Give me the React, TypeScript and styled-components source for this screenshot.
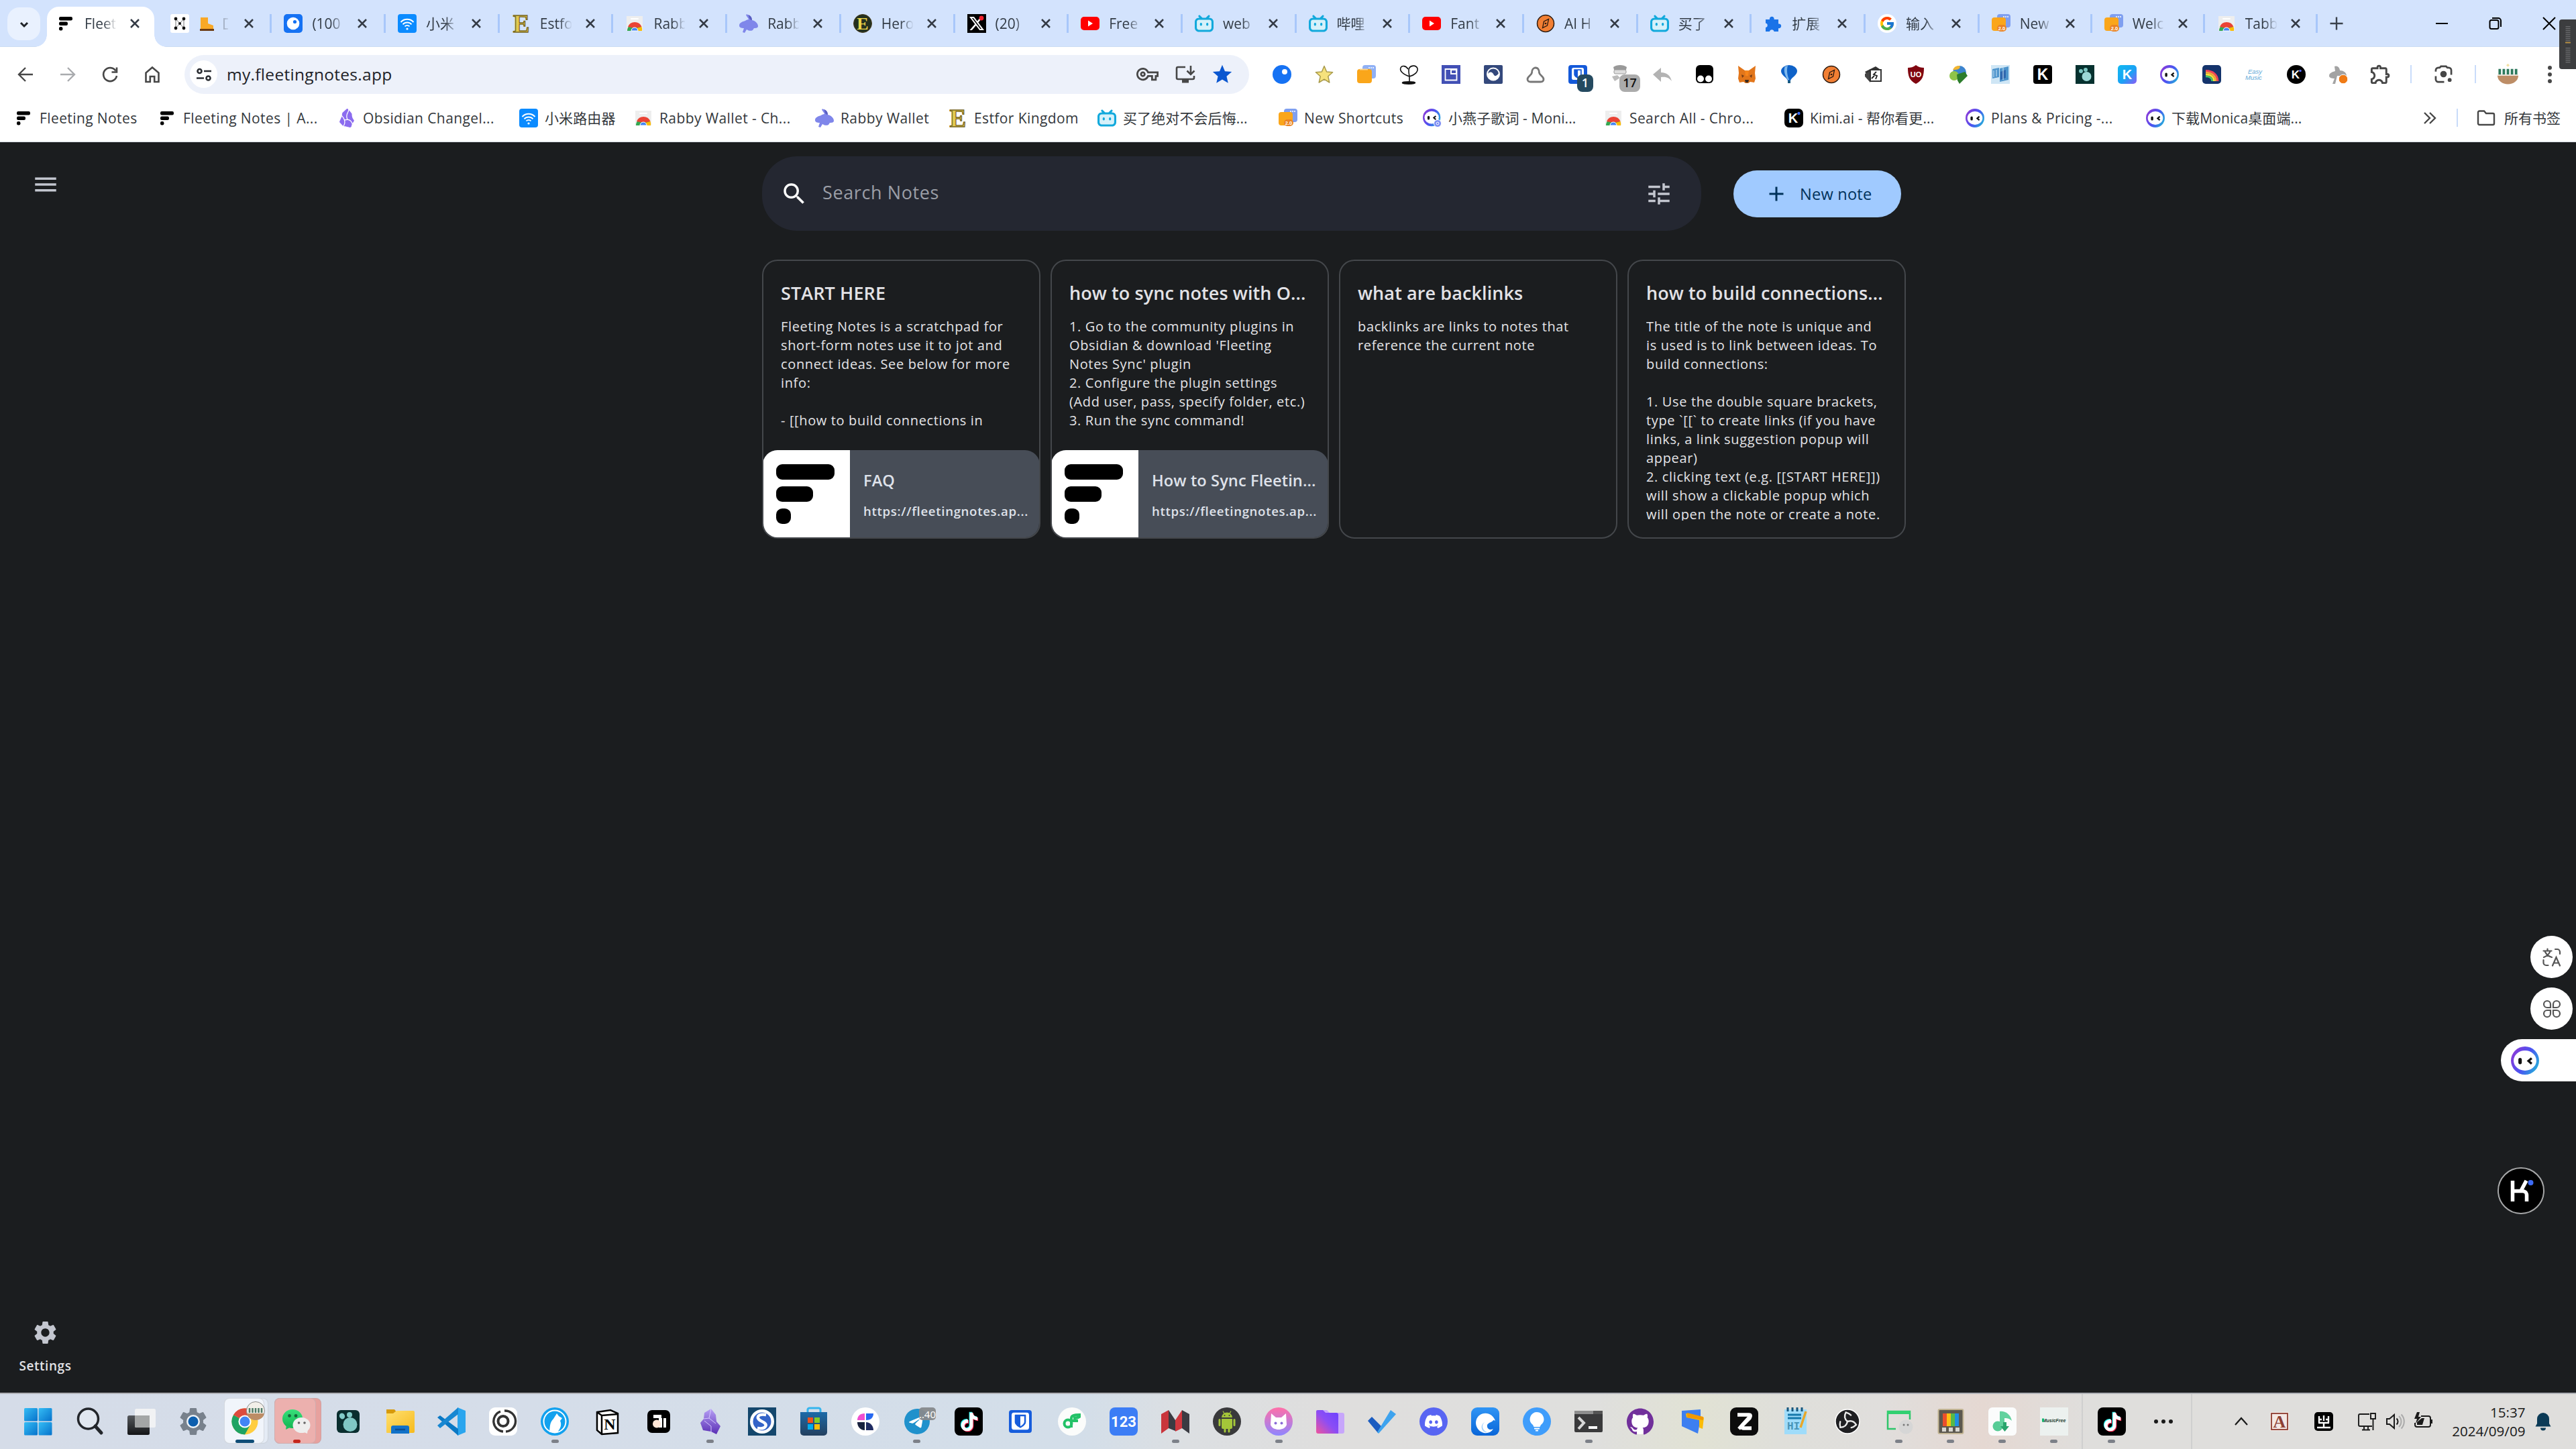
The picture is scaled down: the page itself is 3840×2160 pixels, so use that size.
import React from "react";
import styled, { createGlobalStyle } from "styled-components";
import {
  MdSearch, MdTune, MdMenu, MdSettings, MdAdd, MdStar, MdOutlineVpnKey, MdOutlineExtension,
} from "react-icons/md";
import {
  SiBilibili, SiObsidian, SiTiktok, SiBitwarden, SiDiscord, SiGithub, SiTelegram, SiX,
} from "react-icons/si";
import { FcGoogle } from "react-icons/fc";

const UI_FONT = `"Open Sans", "Noto Sans CJK SC", sans-serif`;

const GlobalStyle = createGlobalStyle`
  html, body { margin: 0; padding: 0; background: #1b1d1f; overflow: hidden; }
  * { box-sizing: border-box; }
  svg { display: block; flex: none; }
`;

/* ---------- browser chrome ---------- */

const Screen = styled.div`
  position: relative;
  display: flex;
  flex-direction: column;
  width: 3840px;
  height: 2160px;
  overflow: hidden;
  background: #1b1d1f;
  font-family: ${UI_FONT};
  font-size: 21px;
`;

const TabStrip = styled.div`
  display: flex;
  align-items: stretch;
  height: 70px;
  padding-left: 11px;
  background: #d3e3fd;
  border-bottom: 1px solid #cbdcf3;
`;

const TabSearch = styled.div`
  display: flex;
  align-items: center;
  justify-content: center;
  width: 49px;
  height: 49px;
  margin: 11px 6px 0 0;
  border-radius: 18px;
  background: #e9f1fe;
`;

const TabShell = styled.div<{ $active?: boolean; $w: number }>`
  position: relative;
  display: flex;
  align-items: center;
  width: ${(p) => p.$w}px;
  height: 70px;
  padding-left: 18px;
  flex: none;
  ${(p) =>
    p.$active &&
    `
    &::before {
      content: "";
      position: absolute;
      z-index: 0;
      left: 4px; top: 10px; width: 160px; height: 60px;
      border-radius: 18px 18px 0 0;
      background: #fff;
    }
    &::after {
      content: "";
      position: absolute;
      left: -14px; bottom: 0; width: 196px; height: 18px;
      background:
        radial-gradient(circle at 0 0, transparent 17.5px, #fff 18px) left / 18px 18px no-repeat,
        radial-gradient(circle at 100% 0, transparent 17.5px, #fff 18px) right / 18px 18px no-repeat;
    }
  `}
  & > * { position: relative; z-index: 1; }
`;

const TabTitle = styled.span`
  width: 47px;
  margin-left: 14px;
  overflow: hidden;
  white-space: nowrap;
  color: #323b45;
  line-height: 30px;
  mask-image: linear-gradient(90deg, #000 60%, rgba(0, 0, 0, 0.05) 100%);
`;

const TabClose = styled.span`
  display: flex;
  justify-content: center;
  width: 30px;
  margin-left: 13px;
`;

const TabDivider = styled.span<{ $hidden?: boolean }>`
  width: 3px;
  height: 28px;
  margin-left: auto;
  background: ${(p) => (p.$hidden ? "transparent" : "#a8c7fa")};
`;

const NewTab = styled.div`
  display: flex;
  align-items: center;
  justify-content: center;
  width: 56px;
`;

const WindowControls = styled.div`
  display: flex;
  align-items: center;
  margin-left: auto;
`;

const WindowButton = styled.div`
  display: flex;
  align-items: center;
  justify-content: center;
  width: 80px;
  height: 70px;
`;

const Toolbar = styled.div`
  display: flex;
  align-items: center;
  height: 81px;
  padding-left: 6px;
  background: #fff;
`;

const ToolButton = styled.div<{ $w?: number }>`
  position: relative;
  display: flex;
  align-items: center;
  justify-content: center;
  width: ${(p) => p.$w ?? 63}px;
  height: 48px;
  flex: none;
`;

const Omnibox = styled.div`
  display: flex;
  align-items: center;
  width: 1587px;
  height: 58px;
  margin: 0 17px 0 17px;
  padding-left: 8px;
  border-radius: 29px;
  background: #edf1fa;
  flex: none;
`;

const SiteInfo = styled.div`
  display: flex;
  align-items: center;
  justify-content: center;
  width: 41px;
  height: 41px;
  border-radius: 50%;
  background: #fff;
`;

const Url = styled.span`
  margin: 0 auto 0 14px;
  color: #1f2328;
  font-size: 24.5px;
  letter-spacing: 0.3px;
  line-height: 34px;
`;

const Badge = styled.span<{ $bg: string; $fg: string; $w: number }>`
  position: absolute;
  left: 31px;
  top: 24px;
  width: ${(p) => p.$w}px;
  height: 26px;
  border-radius: 8px;
  background: ${(p) => p.$bg};
  color: ${(p) => p.$fg};
  font-size: 18px;
  font-weight: 600;
  line-height: 25px;
  text-align: center;
`;

const ThinRule = styled.span`
  width: 2px;
  height: 27px;
  background: #c9dcfa;
  flex: none;
`;

const BookmarkBar = styled.div`
  display: flex;
  align-items: center;
  height: 61px;
  padding: 0 23px 11px 21px;
  background: #fff;
  border-bottom: 1px solid #d5dbe3;
`;

const BookmarkItem = styled.div<{ $w: number; $cjk?: boolean }>`
  display: flex;
  align-items: center;
  gap: 10px;
  width: ${(p) => p.$w}px;
  flex: none;
  color: #34383c;
  line-height: 30px;
  white-space: nowrap;
  letter-spacing: ${(p) => (p.$cjk ? "0.1px" : "0.4px")};
`;

const BarEnd = styled.div`
  display: flex;
  align-items: center;
  margin-left: auto;
  color: #34383c;
  line-height: 30px;
  white-space: nowrap;
`;

const AllBookmarks = styled.div`
  display: flex;
  align-items: center;
  gap: 13px;
  margin-left: 28px;
`;

/* ---------- notes page ---------- */

const Page = styled.main`
  display: flex;
  height: 1864px;
  background: #1b1d1f;
`;

const Rail = styled.nav`
  display: flex;
  flex-direction: column;
  align-items: center;
  justify-content: space-between;
  width: 135px;
  padding: 42px 0 26px;
  color: #c3c6cf;
`;

const RailItem = styled.div`
  display: flex;
  flex-direction: column;
  align-items: center;
  gap: 15px;
  color: #e2e2e6;
  font-size: 19px;
  font-weight: 600;
  letter-spacing: 0.55px;
  line-height: 28px;
`;

const Notes = styled.section`
  display: flex;
  flex-direction: column;
  gap: 43px;
  width: 1705px;
  margin: 21px auto 0 1001px;
`;

const SearchRow = styled.div`
  display: flex;
  align-items: center;
  height: 111px;
`;

const SearchBar = styled.div`
  display: flex;
  align-items: center;
  width: 1400px;
  height: 111px;
  padding: 0 42px 0 27px;
  border-radius: 52px;
  background: #242731;
  color: #fff;
`;

const SearchHint = styled.span`
  margin: -3px auto 0 21px;
  color: #9b9ea6;
  font-size: 27px;
  letter-spacing: 0.6px;
  line-height: 36px;
`;

const NewNote = styled.button`
  display: flex;
  align-items: center;
  gap: 17px;
  width: 250px;
  height: 70px;
  margin-left: 48px;
  padding: 0 0 0 46px;
  border: 0;
  border-radius: 35px;
  background: #a0caff;
  color: #00325a;
  font-family: ${UI_FONT};
  font-size: 23.6px;
  font-weight: 500;
  letter-spacing: 0.2px;
`;

const CardGrid = styled.div`
  display: grid;
  grid-template-columns: repeat(4, 415px);
  gap: 15px;
`;

const Card = styled.article`
  position: relative;
  display: flex;
  flex-direction: column;
  height: 416px;
  border: 2px solid #44474b;
  border-radius: 23px;
  overflow: hidden;
`;

const CardText = styled.div`
  flex: 1;
  min-height: 0;
  margin: 28px 0 25px 26px;
  overflow: hidden;
`;

const CardTitle = styled.h3`
  margin: 0;
  color: #e2e2e6;
  font-size: 27px;
  font-weight: 600;
  letter-spacing: 0.1px;
  line-height: 40px;
  white-space: nowrap;
`;

const CardBody = styled.p`
  margin: 16px 0 0;
  color: #e4e4e7;
  font-size: 20px;
  letter-spacing: 0.64px;
  line-height: 28px;
  white-space: pre;
`;

const LinkPreview = styled.div`
  display: flex;
  height: 131px;
  margin: 0 -1px -1px;
  border-radius: 22px;
  background: #474d57;
  overflow: hidden;
  flex: none;
`;

const PreviewImage = styled.div`
  display: flex;
  flex-direction: column;
  gap: 10.5px;
  width: 130px;
  padding: 21px 0 0 20px;
  background: #fff;
`;

const PreviewBar = styled.span<{ $w: number }>`
  width: ${(p) => p.$w}px;
  height: 22.5px;
  border-radius: 9px;
  background: #000;
`;

const PreviewText = styled.div`
  display: flex;
  flex-direction: column;
  gap: 17px;
  padding: 29px 0 0 20px;
  white-space: nowrap;
  color: #dfe2ea;
`;

const PreviewTitle = styled.span`
  font-size: 23.6px;
  font-weight: 600;
  letter-spacing: 0.1px;
  line-height: 33px;
`;

const PreviewUrl = styled.span`
  font-size: 18.6px;
  font-weight: 600;
  letter-spacing: 0.68px;
  line-height: 24px;
`;

/* ---------- floating widgets ---------- */

const MiniMap = styled.div`
  position: absolute;
  right: 0;
  top: 29px;
  display: flex;
  align-items: center;
  justify-content: center;
  width: 25px;
  height: 74px;
  border-radius: 4px 0 0 4px;
  background: #3c3d3f;
`;

const SideTools = styled.div`
  position: absolute;
  right: 0;
  top: 1395px;
  display: flex;
  flex-direction: column;
  align-items: flex-end;
  gap: 14px;
`;

const RoundTool = styled.div`
  display: flex;
  align-items: center;
  justify-content: center;
  width: 63px;
  height: 63px;
  margin-right: 5px;
  border-radius: 50%;
  background: #fff;
`;

const MonicaPill = styled.div`
  display: flex;
  align-items: center;
  width: 112px;
  height: 63px;
  padding-left: 15px;
  border-radius: 32px 0 0 32px;
  background: #fff;
`;

const KimiBubble = styled.div`
  position: absolute;
  left: 3723px;
  top: 1740px;
  display: flex;
  align-items: center;
  justify-content: center;
  width: 70px;
  height: 70px;
  border: 2px solid #a6a7a8;
  border-radius: 50%;
  background: #000;
`;

/* ---------- taskbar ---------- */

const Taskbar = styled.footer`
  display: flex;
  align-items: stretch;
  height: 84px;
  padding-left: 18.5px;
  border-top: 2px solid #aeb0b5;
  background: linear-gradient(
    90deg,
    #d5dce8 0%, #d5dde9 20%, #d3dee9 42%, #dcdfe2 46%, #dfdedd 52%, #dfdfdd 62%,
    #e1e2d4 66%, #dfdfda 69%, #e0dedc 73%, #e5d8d2 77%, #dfdedc 81%, #dfdedc 100%
  );
`;

const TaskSlot = styled.div<{ $w?: number }>`
  position: relative;
  display: flex;
  align-items: center;
  justify-content: center;
  width: ${(p) => p.$w ?? 77.05}px;
  height: 82px;
  flex: none;
`;

const Highlight = styled.span<{ $bg: string; $w: number; $x: number }>`
  position: absolute;
  left: ${(p) => p.$x}px;
  top: 6px;
  width: ${(p) => p.$w}px;
  height: 68px;
  border-radius: 8px;
  background: ${(p) => p.$bg};
  border: 1px solid rgba(160, 165, 175, 0.35);
`;

const TaskIcon = styled.span`
  position: relative;
`;

const RunMark = styled.span<{ $c: string; $w: number }>`
  position: absolute;
  left: calc(50% - ${(p) => p.$w / 2}px);
  bottom: 9px;
  width: ${(p) => p.$w}px;
  height: 5px;
  border-radius: 3px;
  background: ${(p) => p.$c};
`;

const TaskRule = styled.span`
  width: 2px;
  margin: 0 4px 0 3px;
  background: #cfcfcf;
`;

const Clock = styled.div`
  display: flex;
  flex-direction: column;
  justify-content: center;
  align-items: flex-end;
  width: 116px;
  margin-left: 13px;
  padding-top: 0;
  color: #1a1a1a;
  font-size: 20.6px;
  line-height: 28px;
`;

/* ---------- drawings, 28-unit box ---------- */

const chromeWheel = (
  <g>
    <circle cx="14" cy="14" r="13" fill="#ffcd40" />
    <path d="M14 14 L2.700 7.500 A13 13 0 0 1 25.300 7.500z" fill="#dd4b3e" />
    <path d="M14 14 L2.700 7.500 A13 13 0 0 0 14 27 L19 18z" fill="#1ea362" />
    <path d="M2.700 7.500 A13 13 0 0 1 25.300 7.500 H14z" fill="#dd4b3e" />
    <circle cx="14" cy="14" r="6.400" fill="#fff" />
    <circle cx="14" cy="14" r="5" fill="#4285f4" />
  </g>
);

const monicaFace = (
  <g>
    <circle cx="14" cy="14" r="14" fill="url(#monica)" />
    <ellipse cx="14" cy="14" rx="11.300" ry="10" fill="#fff" />
    <rect x="7.400" y="11.400" width="3.400" height="6.200" rx="1.700" fill="#111" />
    <path d="M20.600 11.600 L17.400 14.400 L20.600 17.200" fill="none" stroke="#111" strokeWidth="2.200" />
  </g>
);

const letter = (ch: string, fill: string, size = 22, y = 22, family = "Liberation Sans") => (
  <text x="14" y={y} textAnchor="middle" fontFamily={family} fontWeight="700" fontSize={size} fill={fill}>
    {ch}
  </text>
);

const art: Record<string, React.ReactNode> = {
  fleeting: (
    <g fill="#000">
      <rect x="4" y="4" width="20" height="5.400" rx="2.200" />
      <rect x="4" y="11.500" width="13" height="5.400" rx="2.200" />
      <rect x="4" y="19" width="5.400" height="5.400" rx="2.200" />
    </g>
  ),
  nodes: (
    <g>
      <rect width="28" height="28" rx="3" fill="#fff" />
      <path d="M8 7v14M20 7v14M8 7l6 7-6 7M20 7l-6 7 6 7" stroke="#777" strokeWidth="1" fill="none" />
      <g fill="#111"><circle cx="8" cy="7" r="2.400" /><circle cx="20" cy="7" r="2.400" /><circle cx="14" cy="14" r="2" /><circle cx="8" cy="21" r="2.400" /><circle cx="20" cy="21" r="2.400" /></g>
    </g>
  ),
  blueSquare: (
    <g><rect width="28" height="28" rx="5" fill="#1672f3" /><circle cx="14" cy="14" r="9.300" fill="#fff" /><circle cx="16.500" cy="11.500" r="2.600" fill="#1672f3" /></g>
  ),
  blueCircle: (
    <g><circle cx="14" cy="14" r="14" fill="#1672f3" /><circle cx="18" cy="10" r="4" fill="#fff" /></g>
  ),
  wifi: (
    <g>
      <rect width="28" height="28" rx="4" fill="#0b8bff" />
      <g fill="none" stroke="#fff" strokeWidth="2"><path d="M4.500 12a13 13 0 0 1 19 0" /><path d="M7.500 15.400a9 9 0 0 1 13 0" /><path d="M10.500 18.400a5 5 0 0 1 7 0" /></g>
      <circle cx="14" cy="22" r="1.600" fill="#fff" />
    </g>
  ),
  estfor: (
    <text x="14" y="26.500" textAnchor="middle" fontFamily="Liberation Serif" fontWeight="700" fontSize="37" fill="#e3c94f" stroke="#7a681f" strokeWidth="1.300">E</text>
  ),
  hero: (
    <g>
      <circle cx="14" cy="14" r="13.500" fill="#23301f" stroke="#4b3f22" />
      <text x="14" y="22.500" textAnchor="middle" fontFamily="Liberation Serif" fontWeight="700" fontSize="26" fill="#ecd64a">E</text>
    </g>
  ),
  webstore: (
    <g>
      <path d="M2 3h24v22H2z" fill="#eeeeee" />
      <rect x="8" y="6" width="12" height="2" rx="1" fill="#fff" />
      <path d="M3 25a11 11 0 0 1 22 0h-6a5 5 0 0 0-10 0z" fill="#34a853" />
      <path d="M4 19a11 11 0 0 1 20.500 0l-8 1.500-5 0z" fill="#ea4335" />
      <path d="M24.500 19a11 11 0 0 1 .5 6h-7l-1-4z" fill="#fbbc04" />
      <path d="M9 25a5 5 0 0 1 10 0z" fill="#4285f4" stroke="#fff" />
    </g>
  ),
  rabby: (
    <g fill="#7f86ea">
      <path d="M10 1c5-1 9 3 9 8 5 1 9 5 9 9 0 3-4 3-6 3l-2 3c-4 2-7 0-9-1l-3 5-3-1 2-6c-4 0-7-1-7-4 0-4 5-6 9-7 1-1 3-2 5-2-1-3-3-4-4-7z" />
      <path d="M10 1c5-1 9 3 9 8-3 0-5-3-5-8z" fill="#5a5fc0" />
    </g>
  ),
  xcom: (
    <g><rect width="28" height="28" fill="#000" /><g transform="translate(3 3)"><SiX size={22} color="#fff" /></g><circle cx="21" cy="6" r="3.400" fill="#f4212e" /></g>
  ),
  youtube: (<g><rect y="4" width="28" height="20" rx="5" fill="#f00" /><path d="M11 9.500v9l7-4.500z" fill="#fff" /></g>),
  bili: (
    <g><rect x="1.500" y="7" width="25" height="18" rx="4" fill="#d6f1fa" /><SiBilibili size={28} color="#12a9dc" /></g>
  ),
  compass: (
    <g><circle cx="14" cy="14" r="12.500" fill="#f27f33" stroke="#2b1a10" strokeWidth="1.500" /><path d="M18.500 7.500l-2 9.500-7 3.500 2-9.500z" fill="#f27f33" stroke="#2b1a10" strokeWidth="1.300" /><circle cx="14" cy="14" r="1.300" fill="#2b1a10" /></g>
  ),
  puzzleBlue: (
    <path d="M3 8h6a3.400 3.400 0 1 1 6.600 0H22v6.500a3.400 3.400 0 1 1 0 6.600V26h-6.500a3.300 3.300 0 0 0-6.500 0H3v-6a3.300 3.300 0 0 0 0-6.500z" fill="#1a73e8" />
  ),
  google: (<g><circle cx="14" cy="14" r="14" fill="#fff" /><g transform="translate(2 2)"><FcGoogle size={24} /></g></g>),
  shortcuts2: (
    <g>
      <rect x="8" y="0" width="20" height="20" rx="4" fill="#7f9ff0" />
      <g fill="#fff"><circle cx="18" cy="4" r="1" /><circle cx="21" cy="4" r="1" /><circle cx="24" cy="4" r="1" /></g>
      <rect y="5" width="21" height="20" rx="4" fill="#faa61a" />
      <rect x="8" y="16" width="14" height="10" rx="5" fill="#ea8324" />
      <text x="15" y="24" textAnchor="middle" fontFamily="Liberation Sans" fontWeight="700" fontSize="7.500" letterSpacing="0" fill="#fff">2.0</text>
    </g>
  ),
  shortcuts: (
    <g>
      <rect x="8" y="0" width="20" height="20" rx="4" fill="#8fb0f5" />
      <g fill="#fff"><circle cx="18" cy="4" r="1" /><circle cx="21" cy="4" r="1" /><circle cx="24" cy="4" r="1" /></g>
      <rect y="6" width="22" height="21" rx="4" fill="#faa61a" /><path d="M4 6.500h12" stroke="#fcd38a" strokeWidth="2" />
    </g>
  ),
  star: (
    <path d="M14 1.500l3.600 8.500 9 .8-6.800 6 2 9.200-7.800-4.800L6.200 26l2-9.200-6.800-6 9-.8z" fill="#f6e27c" stroke="#a99b4c" strokeWidth="1.500" strokeLinejoin="round" />
  ),
  heartTree: (
    <g fill="none" stroke="#111" strokeWidth="1.600"><path d="M15 17C6 14 0 9 2 4c2-4 8-3 11 2M15 17c8-2 13-7 12-12-2-5-9-5-12-1-2 3-1 8 0 13v9" /><ellipse cx="14" cy="26.500" rx="9.500" ry="1.600" fill="#111" /></g>
  ),
  pip: (<g><rect width="28" height="28" fill="#4250b5" /><path d="M5.500 6h17v16.500h-17z" fill="none" stroke="#fff" strokeWidth="1.800" /><path d="M13 6h10v8H13z" fill="#fff" /><path d="M15 8h6v4h-6z" fill="#4250b5" /></g>),
  wave: (<g><rect width="28" height="28" rx="2" fill="#34497c" /><circle cx="14" cy="13.500" r="9" fill="#34497c" stroke="#fff" strokeWidth="2" /><path d="M5.500 14c3-5 7-4 9 0s5 2 8.500-3c0 8-4 11-9 11-4 0-8-3-8.500-8z" fill="#fff" /></g>),
  penguin: (<path d="M14 4c4 0 5.500 4 5.500 7.500C20 15 26 17 26 21c0 3-2 4-4.500 4H6.500C4 25 2 24 2 21c0-4 6-6 6.500-9.500C8.500 8 10 4 14 4z" fill="#fff" stroke="#777" strokeWidth="2.800" />),
  bitwarden: (<g><rect width="28" height="28" rx="4" fill="#1459d9" /><g transform="translate(5 4)"><SiBitwarden size={18} color="#fff" /></g></g>),
  robber: (<g fill="#aaa"><path d="M4 3c5-4 15-4 20 0l-1 4H5z" fill="#999" /><rect x="5" y="7" width="18" height="6" rx="2" fill="#ddd" stroke="#999" /><path d="M2 17l8-2 4 4-8 5z" fill="#bbb" /></g>),
  reply: (<path d="M12 4v7c9 0 14 5 16 13-4-5-8-7-16-6v7L0 14z" fill="#b3b3b3" />),
  tamper: (<g><rect x="1" width="26" height="27" rx="6" fill="#000" /><circle cx="8" cy="20.500" r="5" fill="#fff" /><circle cx="20" cy="20.500" r="5" fill="#fff" /></g>),
  fox: (<g><path d="M1 1l10 7h6l10-7-1 11 1 8-2 6-6-1-3 2h-4l-3-2-6 1-2-6 1-8z" fill="#e2761b" /><path d="M10 16l-4-2 1 5zM18 16l4-2-1 5z" fill="#763d16" /><path d="M11 22h6l-1 4h-4z" fill="#3a2b21" /><path d="M11 8h6l-1 8h-4z" fill="#f6851b" /></g>),
  balloon: (<g><path d="M2 9a12 9 0 0 1 24 0c0 6-8 9-10 14h-4C10 18 2 15 2 9z" fill="#0f62c8" /><path d="M8 2c-3 6 0 14 4 20h2C11 15 10 7 12 1z" fill="#7db8ee" /><path d="M12 23h4v4h-4z" fill="#1a5a80" /></g>),
  runner: (<g><path d="M1 10L17 2l9 6-20 8z" fill="#333" /><path d="M1 13l8-4v17l-8-9z" fill="#444" /><rect x="9" y="7" width="16" height="17" fill="#fff" stroke="#333" strokeWidth="2" /><path d="M18 10l-4 4 5 2-2 5M15 16l-4 4" stroke="#222" strokeWidth="1.800" fill="none" /></g>),
  ublock: (<g><path d="M14 0c4 3 8 4 12 4 0 12-2 19-12 24C4 23 2 16 2 4c4 0 8-1 12-4z" fill="#800610" /><text x="14" y="17.500" textAnchor="middle" fontFamily="Liberation Sans" fontWeight="700" fontSize="11" fill="#fff">UO</text></g>),
  idm: (<g><circle cx="16" cy="11" r="10" fill="#3b84cf" /><path d="M6 7a10 10 0 0 1 10-6c3 4-4 7-10 6z" fill="#f3b52f" /><circle cx="8" cy="16" r="7" fill="#8fc44a" /><path d="M12 14l12-4 4 6-12 12-3-5z" fill="#2c7d2c" /></g>),
  idm2: (<g><rect width="28" height="28" fill="#cfe6f5" /><path d="M2 6l10-2v14L2 20zM13 5l13-3v20l-13 3z" fill="#4e94cc" /><path d="M14 10l8-3v12l-8 3z" fill="#2f67ae" /><path d="M4 8v10M8 7v10M18 4v18" stroke="#cfe6f5" strokeWidth="1" /></g>),
  kBlack: (<g><rect width="28" height="28" rx="4" fill="#000" />{letter("K", "#fff", 23)}</g>),
  paw: (<g><rect width="28" height="28" fill="#06312f" /><circle cx="8" cy="9" r="3" fill="#7cc7c3" /><circle cx="15" cy="7" r="3" fill="#7cc7c3" /><circle cx="16.500" cy="17" r="7" fill="#9bd8d6" /></g>),
  kBlue: (<g><rect width="28" height="28" rx="5" fill="url(#kblue)" />{letter("K", "#fff", 20, 21)}</g>),
  monica: monicaFace,
  monicaBadge: (<g><g transform="scale(.94)">{monicaFace}</g><circle cx="22" cy="22" r="5.500" fill="#7b8cf3" stroke="#fff" strokeWidth="1" /><circle cx="22" cy="22" r="2" fill="none" stroke="#fff" /></g>),
  rainbow: (<g><rect width="28" height="28" rx="5" fill="#14336b" /><g fill="none" strokeWidth="2.800"><path d="M5 8.500c11 0 18 6 18 15.500" stroke="#f0405a" /><path d="M5 11.200c9.500 0 15.200 5 15.200 12.800" stroke="#f9a13a" /><path d="M5 14c8 0 12.500 4 12.500 10" stroke="#f9e03a" /><path d="M5 16.800c6 0 9.700 3 9.700 7.200" stroke="#46c46a" /></g></g>),
  easyMusic: (<g fontFamily="Liberation Sans" fontStyle="italic" fontWeight="400" fill="#62a9d8"><text x="5" y="13" fontSize="9.500">Easy</text><text x="1" y="22" fontSize="9.500">Music</text></g>),
  kimi: (<g><rect width="28" height="28" rx="7" fill="#000" /><g transform="translate(-1 0)">{letter("K", "#fff", 20, 21)}</g><circle cx="21.500" cy="7" r="2.200" fill="#3a6bff" /></g>),
  kimiRound: (<g><circle cx="14" cy="14" r="14" fill="#000" /><g transform="translate(-1 0)">{letter("K", "#fff", 17, 20)}</g><circle cx="20" cy="8.500" r="1.800" fill="#5468ff" /></g>),
  rabbitDot: (<g><path d="M8 2c4-2 8 2 8 6 5 0 10 3 10 8H12l-3 12H5l3-8c-4 0-8-1-8-4 0-4 5-6 9-7z" fill="#a3a3a3" /><circle cx="21" cy="21" r="6.800" fill="#f07b16" stroke="#fff" /></g>),
  lens: (<g fill="none" stroke="#474747" strokeWidth="2.800"><path d="M2 10V8a4 4 0 0 1 4-4h2l2-2h8l2 2h2a4 4 0 0 1 4 4v7M2 17v5a4 4 0 0 0 4 4h9" /><circle cx="14" cy="14" r="5" fill="#474747" stroke="none" /><circle cx="23.500" cy="23" r="3" fill="#474747" stroke="none" /></g>),
  avatar: (<g><path d="M0 16h28a14 11.500 0 0 1-28 0z" fill="#bd8d66" /><g stroke="#2e7a5d" strokeWidth="3.400"><path d="M3 7v8M8.500 7v8M14 7v8M19.500 7v8M25 7v8" /></g><path d="M0 15h28" stroke="#e9dccf" /><circle cx="14" cy="2" r="1.800" fill="#f3e0a5" /></g>),
};

const Art = ({ name, size = 28 }: { name: string; size?: number }) => (
  <svg width={size} height={size} viewBox="0 0 28 28" overflow="visible">{art[name]}</svg>
);

const Stroke = ({ d, size = 28, w = 2.4, color = "#474747" }: { d: string; size?: number; w?: number; color?: string }) => (
  <svg width={size} height={size} viewBox="0 0 28 28" fill="none" stroke={color} strokeWidth={w}>
    <path d={d} />
  </svg>
);

const HiddenSvg = styled.svg`
  position: absolute;
`;

const Gradients = () => (
  <HiddenSvg width="0" height="0">
    <defs>
      <linearGradient id="monica" x1="0" y1=".3" x2="1" y2=".8"><stop offset="0" stopColor="#8a3ad8" /><stop offset=".5" stopColor="#4a55f2" /><stop offset="1" stopColor="#22b5d8" /></linearGradient>
      <linearGradient id="kblue" x1="0" y1="0" x2="1" y2="1"><stop offset="0" stopColor="#12b9f0" /><stop offset=".55" stopColor="#1aa2f5" /><stop offset="1" stopColor="#8e5bf5" /></linearGradient>
      <linearGradient id="win" x1="0" y1="0" x2="1" y2="1"><stop offset="0" stopColor="#35bdf5" /><stop offset="1" stopColor="#0672cb" /></linearGradient>
      <linearGradient id="dark" x1="0" y1="0" x2="0" y2="1"><stop offset="0" stopColor="#55585c" /><stop offset="1" stopColor="#141517" /></linearGradient>
      <linearGradient id="folder" x1="0" y1="0" x2="1" y2="1"><stop offset="0" stopColor="#ffe071" /><stop offset="1" stopColor="#f6ba1c" /></linearGradient>
      <linearGradient id="purple" x1="1" y1="0" x2="0" y2="1"><stop offset="0" stopColor="#6a43ff" /><stop offset=".5" stopColor="#8c4df5" /><stop offset="1" stopColor="#f0559b" /></linearGradient>
      <linearGradient id="cat" x1="0" y1="0" x2="0" y2="1"><stop offset="0" stopColor="#ff6fa8" /><stop offset="1" stopColor="#8f86ff" /></linearGradient>
      <linearGradient id="gem" x1="0" y1="0" x2="0" y2="1"><stop offset="0" stopColor="#b7a0f5" /><stop offset="1" stopColor="#5a2fb5" /></linearGradient>
      <linearGradient id="store" x1="0" y1="0" x2="0" y2="1"><stop offset="0" stopColor="#1c6aa8" /><stop offset="1" stopColor="#24405f" /></linearGradient>
      <linearGradient id="blue" x1="0" y1="0" x2="0" y2="1"><stop offset="0" stopColor="#2f95f5" /><stop offset="1" stopColor="#0a66d8" /></linearGradient>
      <linearGradient id="green" x1="0" y1="0" x2="0" y2="1"><stop offset="0" stopColor="#38e07b" /><stop offset="1" stopColor="#12b552" /></linearGradient>
    </defs>
  </HiddenSvg>
);

/* ---------- taskbar drawings, 42-unit box ---------- */

const tiktok = (
  <g>
    <rect width="42" height="42" rx="8" fill="#000" />
    <g transform="translate(7 6.500)"><SiTiktok size={28} color="#25f4ee" /></g>
    <g transform="translate(9 8.500)"><SiTiktok size={28} color="#fe2c55" /></g>
    <g transform="translate(8 7.500)"><SiTiktok size={28} color="#fff" /></g>
  </g>
);

const obsArm = "M21 21c-1-6 2-10 7-12 2 3 3 5 3 8";

const task: Record<string, React.ReactNode> = {
  windows: (<g fill="url(#win)"><rect x="0" y="1" width="20" height="19.500" rx="1.500" /><rect x="21.500" y="1" width="20" height="19.500" rx="1.500" /><rect x="0" y="22" width="20" height="19.500" rx="1.500" /><rect x="21.500" y="22" width="20" height="19.500" rx="1.500" /></g>),
  search: (<g fill="none" stroke="#23262b"><circle cx="18.500" cy="17" r="15" strokeWidth="3.500" fill="#e1e7f0" /><path d="M29 28l9 10" strokeWidth="5" strokeLinecap="round" /></g>),
  taskview: (<g><rect x="0" y="12" width="33" height="29" rx="2.500" fill="url(#dark)" /><rect x="11" y="2" width="31" height="28" rx="2.500" fill="#f6f6f6" opacity=".85" /><path d="M11 12h22v18H13a2 2 0 0 1-2-2z" fill="#a4a6a6" /></g>),
  settings: (<g><g transform="translate(-4 -4)"><MdSettings size={50} color="#78818c" /></g><circle cx="21" cy="21" r="10" fill="#eef3f8" /><circle cx="21" cy="21" r="7.500" fill="#0d5fae" /></g>),
  chrome: (<g><g transform="scale(1.5)">{chromeWheel}</g><circle cx="37" cy="5" r="13.500" fill="#f2efe9" stroke="#8c8c8c" /><path d="M24.500 9h25a12.500 10 0 0 1-25 0z" fill="#bd8d66" /><path d="M28 1v7M32.500 1v7M37 1v7M41.500 1v7M46 1v7" stroke="#4f7d68" strokeWidth="2.600" /></g>),
  wechat: (<g><ellipse cx="15" cy="17" rx="15" ry="14" fill="url(#green)" /><path d="M6 26l-1 7 8-4z" fill="#1cbf5b" /><circle cx="10.500" cy="12.500" r="2.400" fill="#14683b" /><circle cx="20" cy="12.500" r="2.400" fill="#14683b" /><ellipse cx="28.500" cy="26.500" rx="13" ry="11.500" fill="#eee" /><path d="M30 36l7 3 1-7z" fill="#eee" /><circle cx="24.500" cy="23" r="1.800" fill="#666" /><circle cx="33" cy="23" r="1.800" fill="#666" /></g>),
  paw: (<g><rect x="4" y="4" width="34" height="34" rx="6" fill="#0a2e2f" /><ellipse cx="12" cy="13" rx="4" ry="4.500" fill="#82cbc9" transform="rotate(-30 12 13)" /><circle cx="23" cy="11" r="4" fill="#82cbc9" /><circle cx="24" cy="25.500" r="10.500" fill="#7fc7c4" /></g>),
  explorer: (<g><path d="M1 3h12l4 5-2 4H1z" fill="#d79a0c" /><path d="M1 9h10l5-4h25a2 2 0 0 1 2 2v29a2 2 0 0 1-2 2H2a1 1 0 0 1-1-1z" fill="url(#folder)" /><path d="M8 39V30a3 3 0 0 1 3-3h21a3 3 0 0 1 3 3v9z" fill="#1272c8" /><path d="M14 33h15" stroke="#0b4f93" strokeWidth="2.500" /></g>),
  vscode: (<g><path d="M30 0l12 5v32l-12 5z" fill="#2aa5ee" /><path d="M0 15l4-3 27 20V42z" fill="#0a78c4" /><path d="M0 27l4 4 27-21V0z" fill="#1787d2" /></g>),
  ring: (<g><rect width="42" height="42" rx="9" fill="#fff" /><path d="M17 6a15.500 15.500 0 0 0 4 30M25 36a15.500 15.500 0 0 0-2-31" fill="none" stroke="#333" strokeWidth="3.400" /><circle cx="21" cy="20.500" r="7.500" fill="none" stroke="#333" strokeWidth="4" /></g>),
  wolf: (<g><circle cx="21" cy="21" r="21" fill="#12a1ee" /><circle cx="21" cy="21" r="16.500" fill="none" stroke="#fff" strokeWidth="2" /><path d="M24 9l3 4 5 3-3 4c3 6 0 12-4 17H13c1-8 0-14 6-20z" fill="#fff" /></g>),
  notion: (<g><path d="M6 7l20-3 11 5v29l-24 2-7-6z" fill="#fff" stroke="#000" strokeWidth="2.500" /><path d="M6 7l7 5 24-2M13 12v27" fill="none" stroke="#000" strokeWidth="2.500" /><text x="25" y="33" textAnchor="middle" fontFamily="Liberation Serif" fontWeight="700" fontSize="24">N</text></g>),
  ai: (<g><rect x="4" y="4" width="34" height="34" rx="7" fill="#000" /><path d="M13 11h12v5H13zM21 16h5v14h-5zM28 16h4v14h-4z" fill="#fff" /><circle cx="18" cy="24.500" r="6" fill="#ffe6d6" /></g>),
  gem: (<g><path d="M22 2l7 9 1 10 6 7-6 12-8-4-12-2-4-11 5-6 1-9z" fill="url(#gem)" /><path d="M22 2l-3 14 10 8M19 16l-8 1M12 20l10 8v12" stroke="#d6c8ff" strokeWidth="1" fill="none" /></g>),
  sBlue: (<g><rect width="42" height="42" fill="#14476d" /><circle cx="21" cy="21" r="18" fill="#fff" /><circle cx="21" cy="21" r="13.500" fill="#3363c8" /><path d="M27 11c-14-2-16 6-6 10s6 12-7 10" fill="none" stroke="#fff" strokeWidth="4.500" /></g>),
  store: (<g><path d="M12 8V3a3 3 0 0 1 3-2h13a3 3 0 0 1 3 2v5" fill="none" stroke="#35b5ee" strokeWidth="3" /><path d="M1 7h40v30a5 5 0 0 1-5 5H6a5 5 0 0 1-5-5z" fill="url(#store)" /><path d="M12 15h8v8h-8z" fill="#f1511b" /><path d="M22 15h8v8h-8z" fill="#80cc28" /><path d="M12 25h8v8h-8z" fill="#00adef" /><path d="M22 25h8v8h-8z" fill="#fbbc09" /></g>),
  petals: (<g><circle cx="21" cy="21" r="21" fill="#fff" /><path d="M20 9v10H9c0-6 4-10 11-10z" fill="#ef4fd0" /><path d="M22 9h11c0 7-5 10-11 10z" fill="#2668f0" /><path d="M9 22h11v12C13 34 9 28 9 22z" fill="#18223f" /><path d="M22 22c6 0 11 5 11 12H22z" fill="#1f2b62" /></g>),
  telegram: (<g><circle cx="21" cy="21" r="18" fill="#fff" /><g transform="translate(2 2)"><SiTelegram size={38} color="#1f91cc" /></g><rect x="24" y="0" width="25" height="19" rx="5" fill="#86898c" opacity=".95" /><text x="36.500" y="15.500" textAnchor="middle" fontFamily="Open Sans" fontSize="15" fill="#fff">..40</text></g>),
  tiktok,
  bitwarden: (<g><rect x="4" y="4" width="34" height="34" rx="4" fill="#175ddc" /><g transform="translate(8 7.500)"><SiBitwarden size={26} color="#fff" /></g></g>),
  leafG: (<g><circle cx="21" cy="21" r="21" fill="#fbfcfb" /><circle cx="15" cy="24" r="5.500" fill="none" stroke="#23c268" strokeWidth="4" /><path d="M20 30V16c0-4 4-5 12-5v3c-3 2-6 2-9 2M22 20h8" fill="none" stroke="#23c268" strokeWidth="4" /></g>),
  n123: (<g><rect width="42" height="42" rx="8" fill="#3c7df5" /><text x="21" y="29" textAnchor="middle" fontFamily="Roboto" fontWeight="700" fontSize="22" fill="#fff">123</text></g>),
  zig: (<g><path d="M0 10L11 4v27L0 39z" fill="#c9353c" /><path d="M11 4l10 15v16L11 31z" fill="#3b3b42" /><path d="M21 19L31 4v27l-10 5z" fill="#d0373e" /><path d="M31 4l11 6v29l-11-8z" fill="#3b3b42" /></g>),
  android: (<g><circle cx="21" cy="21" r="21" fill="#39393b" /><path d="M13 17h16v13a2 2 0 0 1-2 2H15a2 2 0 0 1-2-2zM13 15a8 7.500 0 0 1 16 0z" fill="#a4c639" /><path d="M10 18.500v8M32 18.500v8M18 32v4M24 32v4" stroke="#a4c639" strokeWidth="3" strokeLinecap="round" /><path d="M15 5.500l2 3.500M27 5.500l-2 3.500" stroke="#a4c639" strokeWidth="1.200" /><circle cx="17.500" cy="12" r="1" fill="#39393b" /><circle cx="24.500" cy="12" r="1" fill="#39393b" /></g>),
  cat: (<g><circle cx="21" cy="21" r="21" fill="url(#cat)" /><path d="M10 9l7 6h8l7-6 1 17c-2 5-7 7-12 7s-10-2-12-7z" fill="#fff" /><circle cx="16.500" cy="23.500" r="2" fill="#8a6bd8" /><circle cx="25.500" cy="23.500" r="2" fill="#8a6bd8" /></g>),
  folderP: (<g><path d="M8 4h8l4 4h19a3 3 0 0 1 3 3v25a3 3 0 0 1-3 3H10z" fill="#c7a6fb" /><path d="M0 6a2 2 0 0 1 2-2h8l4 4h16a3 3 0 0 1 3 3v28H3a3 3 0 0 1-3-3z" fill="url(#purple)" /></g>),
  todo: (<g><path d="M0 20l6-6 15 15-6 9z" fill="#1b5cc0" /><path d="M14 37L34 4l8 6-26 29z" fill="#3ea3ee" /></g>),
  discord: (<g><circle cx="21" cy="21" r="21" fill="#5865f2" /><g transform="translate(8 8)"><SiDiscord size={26} color="#fff" /></g></g>),
  bird: (<g><rect width="42" height="42" rx="9" fill="url(#blue)" /><path d="M36 20c-3-10-15-15-24-8-9 8-5 23 7 26 6 1 11-1 14-6-6 3-10-1-9-6 2-4 8-4 9-7 1 0 2 0 3 1z" fill="#fff" /><path d="M20 22c-6 6-2 13 4 15-8 1-12-10-4-15z" fill="#9fd0fb" /></g>),
  bulb: (<g><circle cx="21" cy="21" r="21" fill="#3f9dfb" /><path d="M21 7a10.500 10.500 0 0 1 6 19l-1.500 3h-9L15 26a10.500 10.500 0 0 1 6-19zM17 30.500h8v2h-8zM19 33.500h4v2h-4z" fill="#fff" /></g>),
  terminal: (<g><rect y="5" width="42" height="32" rx="2" fill="#3a3a3b" /><path d="M0 5h28v5H0z" fill="#8e8e8e" /><path d="M28 5h14v5H28z" fill="#555" /><path d="M6 15l8 8-8 9" fill="none" stroke="#d8d8d8" strokeWidth="4" /><path d="M21 30h13" stroke="#fff" strokeWidth="4" /></g>),
  github: (<g><circle cx="21" cy="21" r="19" fill="#fff" /><g transform="translate(1 1)"><SiGithub size={40} color="#71309b" /></g></g>),
  files: (<g><path d="M5 5l28-2v13l-4 23L5 28z" fill="#3d7ff0" /><path d="M11 9l27 6-2 17-5-2V19L12 15z" fill="#fbbc05" /><path d="M13 8l24 6v5L13 15z" fill="#f29900" /></g>),
  zBlack: (<g><rect width="42" height="42" rx="9" fill="#0c0c0c" /><path d="M11 11h17q4 0 1 5L19 26q-3 5 1 5h12" fill="none" stroke="#fff" strokeWidth="5.500" /><path d="M30 13L13 32" stroke="#fff" strokeWidth="5" /></g>),
  notepad: (<g><path d="M4 3h33v37H4z" fill="#9fdcfa" /><path d="M9 0v6M16 0v6M23 0v6M30 0v6" stroke="#17567d" strokeWidth="3" /><path d="M9 11h20M9 16h20" stroke="#1579ab" strokeWidth="3" /><text x="8" y="33" fontFamily="Liberation Mono" fontWeight="700" fontSize="16" fill="#4795b8">HI</text><path d="M36 6L28 30" stroke="#e9a72a" strokeWidth="3.500" /></g>),
  obs: (<g><circle cx="21" cy="21" r="18" fill="#1f1f22" stroke="#fff" strokeWidth="1.500" /><g fill="none" stroke="#e8e8e8" strokeWidth="2.400" strokeLinecap="round"><path d={obsArm} transform="rotate(-40 21 21)" /><path d={obsArm} transform="rotate(80 21 21)" /><path d={obsArm} transform="rotate(200 21 21)" /></g></g>),
  wxwork: (<g><path d="M16 32H4V6h33v12" fill="none" stroke="#2fc56a" strokeWidth="2.500" /><path d="M3 5h35v5H3z" fill="#32d070" /><circle cx="31" cy="29" r="10.500" fill="#d6d6d6" /><circle cx="28" cy="26" r="1.500" fill="#777" /><circle cx="34" cy="26" r="1.500" fill="#777" /></g>),
  powertoys: (<g><rect x="2.500" y="3" width="37" height="36" rx="2" fill="#5c584f" stroke="#c3b594" strokeWidth="2" /><path d="M9 9h6v19H9z" fill="#ea4f2c" /><path d="M15 9h6v19h-6z" fill="#fbc014" /><path d="M21 9h6v19h-6z" fill="#56b947" /><path d="M27 9h6v19h-6z" fill="#1f8fe0" /><path d="M8 30h6v6H8zM18 30h6v6h-6zM28 30h6v6h-6z" fill="#d8d6d0" /></g>),
  noteG: (<g><rect width="42" height="42" rx="6" fill="#fbfcfc" /><circle cx="14" cy="28" r="7.500" fill="#57cc96" /><path d="M17 28V6c8-1 16 4 18 14-4-4-8-4-11-4v13z" fill="#63d29e" /><path d="M22 22h5v6h4l-6.500 8L18 28h4z" fill="#2aa56d" /></g>),
  musicFree: (<g><rect width="42" height="42" fill="#ecf1ef" /><text x="21" y="22" textAnchor="middle" fontFamily="Liberation Sans" fontWeight="700" fontStyle="italic" fontSize="7" fill="#1a3a2c">MusicFree</text><rect x="3" y="16.500" width="3" height="5" fill="#16b96e" /></g>),
};

const TaskArt = ({ name }: { name: string }) => (
  <svg width={42} height={42} viewBox="0 0 42 42" overflow="visible">{task[name]}</svg>
);

/* ---------- content ---------- */

const tabs: [string, string][] = [
  ["fleeting", "Fleet"], ["nodes", "boot"], ["blueSquare", "(100"], ["wifi", "小米"], ["estfor", "Estfo"],
  ["webstore", "Rabb"], ["rabby", "Rabb"], ["hero", "Hero"], ["xcom", "(20)"], ["youtube", "Free"],
  ["bili", "web"], ["bili", "哔哩"], ["youtube", "Fant"], ["compass", "AI H"], ["bili", "买了"],
  ["puzzleBlue", "扩展"], ["google", "输入"], ["shortcuts2", "New"], ["shortcuts2", "Welc"], ["webstore", "Tabb"],
];

const extensions = [
  "blueCircle", "star", "shortcuts", "heartTree", "pip", "wave", "penguin", "bitwarden", "robber", "reply", "tamper",
  "fox", "balloon", "compass", "runner", "ublock", "idm", "idm2", "kBlack", "paw", "kBlue", "monica", "rainbow",
  "easyMusic", "kimiRound", "rabbitDot",
];

const bookmarks: [string, string, number, boolean?][] = [
  ["fleeting", "Fleeting Notes", 214],
  ["fleeting", "Fleeting Notes | A...", 268],
  ["obsidian", "Obsidian Changel...", 271],
  ["wifi", "小米路由器", 171, true],
  ["webstore", "Rabby Wallet - Ch...", 270],
  ["rabby", "Rabby Wallet", 199],
  ["estfor", "Estfor Kingdom", 222],
  ["bili", "买了绝对不会后悔...", 270, true],
  ["shortcuts2", "New Shortcuts", 215],
  ["monicaBadge", "小燕子歌词 - Moni...", 270, true],
  ["webstore", "Search All - Chro...", 269],
  ["kimi", "Kimi.ai - 帮你看更...", 270, true],
  ["monica", "Plans & Pricing -...", 269],
  ["monica", "下载Monica桌面端...", 269, true],
];

const notes = [
  {
    title: "START HERE",
    body: "Fleeting Notes is a scratchpad for\nshort-form notes use it to jot and\nconnect ideas. See below for more\ninfo:\n\n- [[how to build connections in",
    link: "FAQ",
  },
  {
    title: "how to sync notes with O...",
    body: "1. Go to the community plugins in\nObsidian & download 'Fleeting\nNotes Sync' plugin\n2. Configure the plugin settings\n(Add user, pass, specify folder, etc.)\n3. Run the sync command!",
    link: "How to Sync Fleetin...",
  },
  { title: "what are backlinks", body: "backlinks are links to notes that\nreference the current note" },
  {
    title: "how to build connections...",
    body: "The title of the note is unique and\nis used is to link between ideas. To\nbuild connections:\n\n1. Use the double square brackets,\ntype `[[` to create links (if you have\nlinks, a link suggestion popup will\nappear)\n2. clicking text (e.g. [[START HERE]])\nwill show a clickable popup which\nwill open the note or create a note.",
  },
];

const GRAY = "#7c8088";
const apps: { icon: string; run?: string }[] = [
  { icon: "windows" }, { icon: "search" }, { icon: "taskview" }, { icon: "settings" },
  { icon: "chrome", run: "#0f4d77" }, { icon: "wechat", run: "#c4261d" }, { icon: "paw" }, { icon: "explorer" },
  { icon: "vscode" }, { icon: "ring" }, { icon: "wolf", run: GRAY }, { icon: "notion" }, { icon: "ai" },
  { icon: "gem", run: GRAY }, { icon: "sBlue" }, { icon: "store" }, { icon: "petals" }, { icon: "telegram", run: GRAY },
  { icon: "tiktok" }, { icon: "bitwarden" }, { icon: "leafG" }, { icon: "n123" }, { icon: "zig", run: GRAY },
  { icon: "android" }, { icon: "cat", run: GRAY }, { icon: "folderP" }, { icon: "todo" }, { icon: "discord" },
  { icon: "bird" }, { icon: "bulb" }, { icon: "terminal", run: GRAY }, { icon: "github" }, { icon: "files" },
  { icon: "zBlack" }, { icon: "notepad" }, { icon: "obs" }, { icon: "wxwork", run: GRAY }, { icon: "powertoys", run: GRAY },
  { icon: "noteG", run: GRAY }, { icon: "musicFree", run: GRAY },
];

const BootTitle = () => (
  <svg width="45" height="28" viewBox="0 0 45 28">
    <path d="M3 5h11v9l8 3v6H3z" fill="#f9a826" />
    <path d="M2 22h21v3H2z" fill="#6b3a12" />
    <path d="M44 7h-6v15h6" fill="none" stroke="#7d8694" strokeWidth="2" />
  </svg>
);

const CLOSE = "M8 8l12 12M20 8L8 20";

export default function App() {
  return (
    <Screen>
      <GlobalStyle />
      <Gradients />

      <TabStrip>
        <TabSearch><Stroke d="M9 12l5 5 5-5" w={3} color="#1f2328" /></TabSearch>
        {tabs.map(([icon, title], i) => (
          <TabShell key={i} $active={i === 0} $w={i < 17 ? 169.7 : 168}>
            <Art name={icon} />
            <TabTitle>{title === "boot" ? <BootTitle /> : title}</TabTitle>
            <TabClose><Stroke d={CLOSE} w={2.5} color="#343b45" /></TabClose>
            <TabDivider $hidden={i === 0} />
          </TabShell>
        ))}
        <NewTab><Stroke d="M14 4.500v19M4.500 14h19" w={2.4} color="#3b424c" /></NewTab>
        <WindowControls>
          <WindowButton><Stroke d="M5 14h18" w={2} color="#000" /></WindowButton>
          <WindowButton>
            <svg width="28" height="28" viewBox="0 0 28 28" fill="none" stroke="#000" strokeWidth="2">
              <rect x="5.500" y="9" width="13" height="13" rx="2.500" />
              <path d="M9 6h9a4 4 0 0 1 4 4v9" />
            </svg>
          </WindowButton>
          <WindowButton><Stroke d="M5 5l18 18M23 5L5 23" w={2} color="#000" /></WindowButton>
        </WindowControls>
      </TabStrip>

      <Toolbar>
        <ToolButton><Stroke d="M25 14H4.500M14 4L4 14l10 10" /></ToolButton>
        <ToolButton><Stroke d="M3 14h20.500M14 4l10 10-10 10" color="#a9abae" /></ToolButton>
        <ToolButton><Stroke d="M22.500 8.500A10 10 0 1 0 24 16M24 3.500V10.500H16.500" w={2.6} /></ToolButton>
        <ToolButton><Stroke d="M4.500 25V11.500L14 3.500l9.500 8V25h-6.300v-8h-6.400v8z" w={2.6} /></ToolButton>
        <Omnibox>
          <SiteInfo>
            <svg width="28" height="28" viewBox="0 0 28 28" fill="none" stroke="#2b2e33" strokeWidth="2.600">
              <circle cx="7.500" cy="9" r="3" /><path d="M14 9h11M3 19.500h11" /><circle cx="20.500" cy="19.500" r="3" />
            </svg>
          </SiteInfo>
          <Url>my.fleetingnotes.app</Url>
          <ToolButton $w={56}><MdOutlineVpnKey size={33} color="#474747" /></ToolButton>
          <ToolButton $w={57}>
            <svg width="30" height="28" viewBox="0 0 30 28" fill="none" stroke="#474747" strokeWidth="2.600">
              <path d="M15 3H4a2 2 0 0 0-2 2v14a2 2 0 0 0 2 2h22a2 2 0 0 0 2-2v-3" /><path d="M23 1v12M17.500 8.500L23 14l5.500-5.500" /><path d="M10 24h10" strokeWidth="5" />
            </svg>
          </ToolButton>
          <ToolButton $w={54}><MdStar size={34} color="#0b57d0" /></ToolButton>
          <ToolButton $w={13} />
        </Omnibox>
        {extensions.map((name, i) => (
          <ToolButton key={i}>
            <Art name={name} />
            {name === "bitwarden" && <Badge $bg="#254a60" $fg="#fff" $w={24}>1</Badge>}
            {name === "robber" && <Badge $bg="#ababab" $fg="#111" $w={31}>17</Badge>}
          </ToolButton>
        ))}
        <ToolButton><MdOutlineExtension size={35} color="#474747" /></ToolButton>
        <ToolButton $w={13} />
        <ThinRule />
        <ToolButton $w={94}><Art name="lens" size={27} /></ToolButton>
        <ThinRule />
        <ToolButton $w={94}><Art name="avatar" size={31} /></ToolButton>
        <ToolButton $w={32}>
          <svg width="8" height="28" viewBox="0 0 8 28" fill="#474747"><circle cx="4" cy="4" r="3" /><circle cx="4" cy="14" r="3" /><circle cx="4" cy="24" r="3" /></svg>
        </ToolButton>
      </Toolbar>

      <BookmarkBar>
        {bookmarks.map(([icon, label, w, cjk], i) => (
          <BookmarkItem key={i} $w={w} $cjk={cjk}>
            {icon === "obsidian" ? <SiObsidian size={28} color="#8b6cef" /> : <Art name={icon} />}
            {label}
          </BookmarkItem>
        ))}
        <BarEnd>
          <ToolButton $w={80}><Stroke d="M6 6l8 8-8 8M14 6l8 8-8 8" w={2.4} /></ToolButton>
          <ThinRule />
          <AllBookmarks>
            <Stroke d="M2 5.500a2 2 0 0 1 2-2h7l3 3.500h10a2 2 0 0 1 2 2v13a2 2 0 0 1-2 2H4a2 2 0 0 1-2-2z" w={2.4} />
            所有书签
          </AllBookmarks>
        </BarEnd>
      </BookmarkBar>

      <Page>
        <Rail>
          <MdMenu size={42} />
          <RailItem>
            <MdSettings size={41} color="#c3c6cf" />
            Settings
          </RailItem>
        </Rail>
        <Notes>
          <SearchRow>
            <SearchBar>
              <MdSearch size={42} />
              <SearchHint>Search Notes</SearchHint>
              <MdTune size={42} color="#c3c6cf" />
            </SearchBar>
            <NewNote><MdAdd size={36} />New note</NewNote>
          </SearchRow>
          <CardGrid>
            {notes.map((n) => (
              <Card key={n.title}>
                <CardText>
                  <CardTitle>{n.title}</CardTitle>
                  <CardBody>{n.body}</CardBody>
                </CardText>
                {n.link && (
                  <LinkPreview>
                    <PreviewImage>
                      <PreviewBar $w={87} />
                      <PreviewBar $w={55} />
                      <PreviewBar $w={22} />
                    </PreviewImage>
                    <PreviewText>
                      <PreviewTitle>{n.link}</PreviewTitle>
                      <PreviewUrl>https://fleetingnotes.ap...</PreviewUrl>
                    </PreviewText>
                  </LinkPreview>
                )}
              </Card>
            ))}
          </CardGrid>
        </Notes>
      </Page>

      <Taskbar>
        {apps.map(({ icon, run }) => (
          <TaskSlot key={icon}>
            {icon === "chrome" && <Highlight $bg="#e4ebf5" $w={66} $x={7} />}
            {icon === "chrome" && <Highlight $bg="#f1f5fb" $w={60} $x={7} />}
            {icon === "wechat" && <Highlight $bg="#e7a19e" $w={70} $x={5} />}
            {icon === "wechat" && <Highlight $bg="#ecb0ae" $w={62} $x={5} />}
            <TaskIcon><TaskArt name={icon} /></TaskIcon>
            {run && <RunMark $c={run} $w={icon === "chrome" ? 28 : 11} />}
          </TaskSlot>
        ))}
        <TaskRule />
        <TaskSlot><TaskIcon><TaskArt name="tiktok" /></TaskIcon><RunMark $c={GRAY} $w={11} /></TaskSlot>
        <TaskSlot>
          <svg width="30" height="8" viewBox="0 0 30 8" fill="#1a1a1a"><circle cx="4" cy="4" r="3" /><circle cx="15" cy="4" r="3" /><circle cx="26" cy="4" r="3" /></svg>
        </TaskSlot>
        <TaskRule />
        <TaskSlot $w={39} />
        <TaskSlot $w={60}><Stroke d="M5 19l9-10 9 10" w={2.2} color="#1a1a1a" /></TaskSlot>
        <TaskSlot $w={54}>
          <svg width="28" height="28" viewBox="0 0 28 28">
            <rect width="28" height="28" fill="#f4e8e4" /><rect x="2" y="2" width="24" height="24" fill="none" stroke="#8d3b2e" strokeWidth="1.800" />
            <text x="14" y="22.500" textAnchor="middle" fontFamily="Liberation Serif" fontWeight="700" fontSize="26" fill="#8d4034">A</text>
          </svg>
        </TaskSlot>
        <TaskSlot $w={78}>
          <svg width="28" height="28" viewBox="0 0 28 28"><rect width="28" height="28" rx="5" fill="#000" /><path d="M4 23h20M6 16h16M14 16v7M7 16V6M14 13V5M21 16V6M7 11h4M17 11h4" stroke="#fff" strokeWidth="2.400" fill="none" /></svg>
        </TaskSlot>
        <TaskSlot $w={50}><Stroke d="M18 3H4a2 2 0 0 0-2 2v14a2 2 0 0 0 2 2h18M7 26.500h12M10 21v5M16 21v5M20 2h7v8h-7zM23.500 10v17" w={1.9} color="#1a1a1a" /></TaskSlot>
        <TaskSlot $w={36}>
          <svg width="28" height="28" viewBox="0 0 28 28" fill="none" stroke="#1a1a1a" strokeWidth="2"><path d="M1 10v8h4l7 6V4L5 10z" /><path d="M15.500 9.500a6 6 0 0 1 0 9" /><path d="M19 6a11 11 0 0 1 0 16M22.500 3.500a15 15 0 0 1 0 21" stroke="#aaa" /></svg>
        </TaskSlot>
        <TaskSlot $w={46}>
          <svg width="28" height="28" viewBox="0 0 28 28"><path d="M11 6h11a3 3 0 0 1 3 3v10a3 3 0 0 1-3 3H5a3 3 0 0 1-3-3v-3" fill="none" stroke="#1a1a1a" strokeWidth="2" /><path d="M26 11h2v6h-2zM5 19v-4l7-6h4l-3 10zM5 0L1 10h4l-2 7 8-10H7l2-7z" fill="#1a1a1a" /></svg>
        </TaskSlot>
        <Clock><span>15:37</span><span>2024/09/09</span></Clock>
        <TaskSlot $w={54}>
          <svg width="28" height="28" viewBox="0 0 28 28" fill="#0b3a56"><path d="M14 1a9 9 0 0 1 9 9v7l2.500 4.500h-23L5 17v-7a9 9 0 0 1 9-9zM10 23.500h8a4 4 0 0 1-8 0z" /></svg>
        </TaskSlot>
      </Taskbar>

      <MiniMap>
        <svg width="8" height="64" viewBox="0 0 8 64"><path d="M4 5v26M4 37v24" stroke="#67686a" strokeWidth="7" strokeDasharray="1.500 1.500" /><path d="M0 29.500h8" stroke="#c79a3c" strokeWidth="1.500" /></svg>
      </MiniMap>

      <SideTools>
        <RoundTool>
          <svg width="28" height="28" viewBox="0 0 28 28" fill="none" stroke="#555" strokeWidth="2.200" strokeLinecap="round">
            <path d="M1.500 4.500h12M7.500 1.500v3M11.500 5C10 9.500 6 12.500 2 14M4 6c2 4 6 7 10 8" />
            <path d="M19 2h3a4 4 0 0 1 4 4v3M1.500 18v4a4 4 0 0 0 4 4h3" />
            <path d="M15 26.500l5.500-12.500L26 26.500M17 22.500h7" />
          </svg>
        </RoundTool>
        <RoundTool>
          <svg width="28" height="28" viewBox="0 0 28 28" fill="none" stroke="#555" strokeWidth="2.200">
            <path d="M12 12H7a5 5 0 1 1 5-5zM16 12V7a5 5 0 1 1 5 5zM12 16v5a5 5 0 1 1-5-5zM16 16h5a5 5 0 1 1-5 5z" />
          </svg>
        </RoundTool>
        <MonicaPill><Art name="monica" size={42} /></MonicaPill>
      </SideTools>

      <KimiBubble>
        <svg width="40" height="40" viewBox="0 0 40 40" fill="none" stroke="#fff" strokeWidth="5.500">
          <path d="M7.500 5v31M7.500 20.500h15a6 6 0 0 1 6 6V36M20 20l8-15" />
          <circle cx="34.500" cy="8" r="4" fill="#3d6bf5" stroke="none" />
        </svg>
      </KimiBubble>
    </Screen>
  );
}
